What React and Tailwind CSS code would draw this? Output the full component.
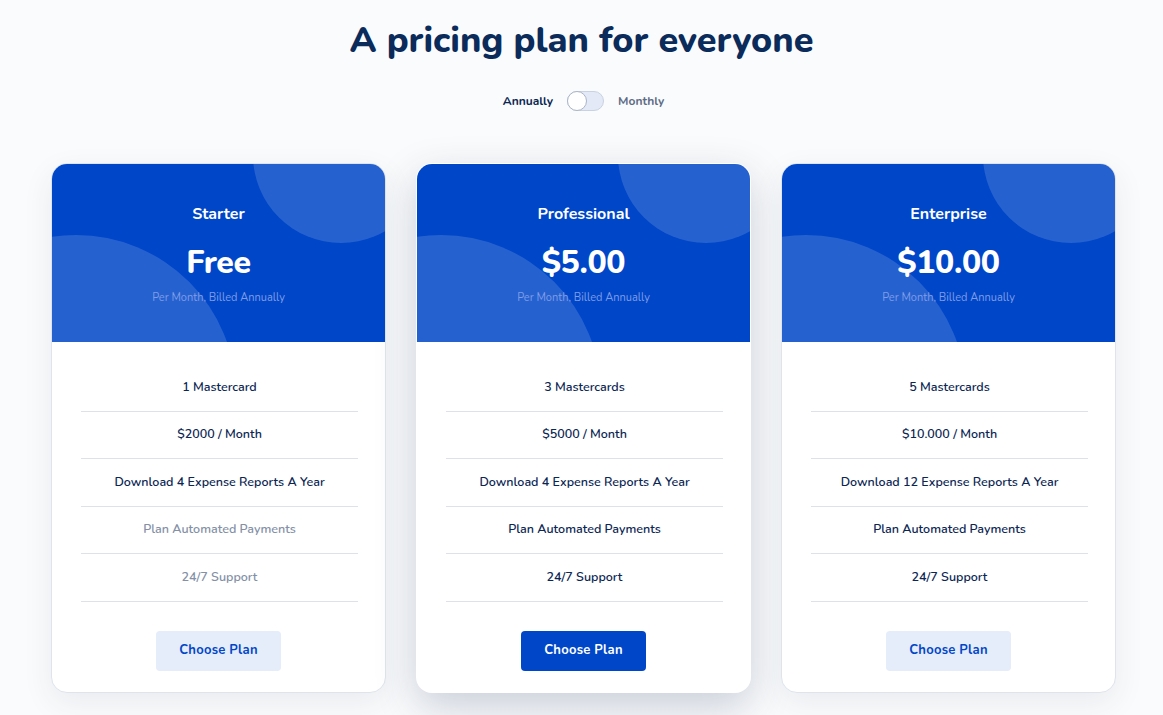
import React from "react";

const plans = [
  {
    name: "Starter",
    price: "Free",
    features: [
      { label: "1 Mastercard", on: true },
      { label: "$2000 / Month", on: true },
      { label: "Download 4 Expense Reports A Year", on: true },
      { label: "Plan Automated Payments", on: false },
      { label: "24/7 Support", on: false },
    ],
    featured: false,
  },
  {
    name: "Professional",
    price: "$5.00",
    features: [
      { label: "3 Mastercards", on: true },
      { label: "$5000 / Month", on: true },
      { label: "Download 4 Expense Reports A Year", on: true },
      { label: "Plan Automated Payments", on: true },
      { label: "24/7 Support", on: true },
    ],
    featured: true,
  },
  {
    name: "Enterprise",
    price: "$10.00",
    features: [
      { label: "5 Mastercards", on: true },
      { label: "$10.000 / Month", on: true },
      { label: "Download 12 Expense Reports A Year", on: true },
      { label: "Plan Automated Payments", on: true },
      { label: "24/7 Support", on: true },
    ],
    featured: false,
  },
];

const PlanCard = ({ plan }) => (
  <div
    className={`overflow-hidden rounded-2xl border bg-white ${
      plan.featured
        ? "border-transparent shadow-[0_14px_40px_rgba(30,50,90,0.22)]"
        : "border-[#dfe4ec] shadow-[0_10px_30px_rgba(30,50,90,0.08)]"
    }`}
  >
    <div className="relative h-[178px] overflow-hidden bg-[#0046c8] text-center text-white">
      <div className="absolute left-[-136px] top-[71px] h-[320px] w-[320px] rounded-full bg-white/15" />
      <div className="absolute left-[201px] top-[-97px] h-[176px] w-[176px] rounded-full bg-white/15" />
      <div className="relative pt-[39px]">
        <p className="text-[16px] font-bold leading-[22px]">{plan.name}</p>
        <p className="mt-[18px] text-[32px] font-extrabold leading-[40px] tracking-[-0.01em]">{plan.price}</p>
        <p className="mt-[8px] text-[11px] leading-[14px] text-[#7f9ce6]">Per Month, Billed Annually</p>
      </div>
    </div>
    <div className="pl-[29px] pr-[27px] pt-[22px]">
      {plan.features.map((f) => (
        <div
          key={f.label}
          className={`flex h-[47.5px] items-center justify-center border-b border-[#dde2ea] text-[12.5px] font-semibold ${
            f.on ? "text-[#0b2653]" : "text-[#8390a6]"
          }`}
        >
          {f.label}
        </div>
      ))}
    </div>
    <div className="flex justify-center pb-[21px] pt-[29px]">
      <button
        type="button"
        className={`h-[40px] w-[125px] rounded-[4px] text-[13px] font-bold tracking-[0.02em] ${
          plan.featured ? "bg-[#0046c8] text-white" : "bg-[#e5ecfa] text-[#0046c8]"
        }`}
      >
        Choose Plan
      </button>
    </div>
  </div>
);

export default function App() {
  return (
    <div
      className="min-h-screen bg-[#fafbfc] pb-6"
      style={{ fontFamily: '"Nunito", "Lato", "Noto Sans", sans-serif' }}
    >
      <h1 className="pt-[16px] text-center text-[36px] font-extrabold leading-[50px] text-[#0b2b5b]">
        A pricing plan for everyone
      </h1>
      <div className="mt-[25px] flex items-center justify-center gap-[14px] pl-[4px] text-[12px] font-bold">
        <span className="text-[#0b2653]">Annually</span>
        <span className="relative h-[20px] w-[37px] rounded-full border border-[#c9d2e2] bg-[#e3e9f6]">
          <span className="absolute left-[-1px] top-[-1px] h-[20px] w-[20px] rounded-full border border-[#aab5c8] bg-white" />
        </span>
        <span className="text-[#5d6c86]">Monthly</span>
      </div>
      <div className="ml-[51px] mt-[52px] grid w-[1065px] grid-cols-3 gap-[30px]">
        {plans.map((p) => (
          <PlanCard key={p.name} plan={p} />
        ))}
      </div>
    </div>
  );
}
